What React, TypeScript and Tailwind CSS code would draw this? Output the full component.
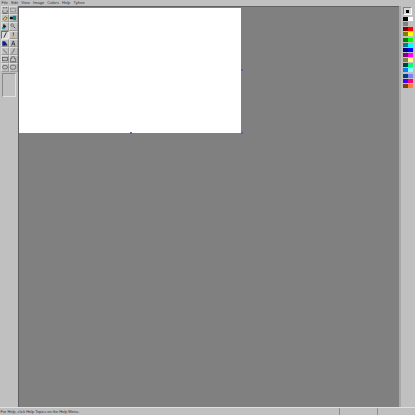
const tools: React.ReactNode[] = [
  <path d="M2 2h2M5 2h2M2 5v2M7 5v2M2 8h5" stroke="#333" strokeWidth="0.8" fill="none" />,
  <rect x="1.5" y="2.5" width="6" height="4" stroke="#555" strokeWidth="0.7" strokeDasharray="1 0.6" fill="none" />,
  <g><path d="M2 6l3-3 2 1.500-3 3z" fill="#d8d050" stroke="#222" strokeWidth="0.6" /><path d="M1 8h4" stroke="#e8e8e8" strokeWidth="0.7" /></g>,
  <g><path d="M1 3h3l1 3h-4z" fill="#111" /><path d="M4 2h4v5h-3z" fill="#108080" /></g>,
  <g><path d="M3 2l3 3-3 3-1-2z" fill="#222" /><path d="M1 6h3v2h-3z" fill="#20a0a0" /></g>,
  <g><circle cx="3.5" cy="3.5" r="1.5" fill="none" stroke="#444" strokeWidth="0.6" /><path d="M5 5l2 2" stroke="#3040c0" strokeWidth="1.1" /></g>,
  <path d="M6 1.500L3.200 7.500" stroke="#222" strokeWidth="1" />,
  <g><path d="M5 1.500v4" stroke="#806020" strokeWidth="1.2" /><path d="M4 5h2v2.500h-2z" fill="#d0b040" /></g>,
  <g><path d="M1.500 2.500h3l2 3-2 2h-3z" fill="#102090" /><path d="M5 5.500h2v2h-2z" fill="#333" /></g>,
  <path d="M3 7.500l1.500-5h.6l1.500 5M3.600 5.800h2.800" stroke="#222" strokeWidth="0.8" fill="none" />,
  <path d="M2 2.500l5 5" stroke="#333" strokeWidth="0.7" />,
  <path d="M6.500 2c-2 .5-.5 2-1.500 3s-2 .5-1.500 2.500" stroke="#333" strokeWidth="0.7" fill="none" />,
  <rect x="1.500" y="3" width="6" height="3.500" fill="#c0c0c0" stroke="#333" strokeWidth="0.6" />,
  <path d="M3 2h3v2h1.500v3.500h-6v-3.500h1.500z" fill="#c0c0c0" stroke="#333" strokeWidth="0.6" />,
  <ellipse cx="4.500" cy="4.700" rx="3" ry="2" fill="#c0c0c0" stroke="#333" strokeWidth="0.6" />,
  <rect x="1.500" y="2.500" width="6" height="4.500" rx="1.800" fill="#c0c0c0" stroke="#333" strokeWidth="0.6" />,
];

const palette = [
  ["#000000", "#ffffff"], ["#808080", "#c0c0c0"], ["#800000", "#ff0000"], ["#808000", "#ffff00"],
  ["#008000", "#00ff00"], ["#008080", "#00ffff"], ["#000080", "#0000ff"], ["#800080", "#ff00ff"],
  ["#808040", "#ffff80"], ["#004040", "#00ff80"], ["#0080ff", "#80ffff"], ["#004080", "#8080ff"],
  ["#4000ff", "#ff0080"], ["#804000", "#ff8040"],
];

const menus = ["File", "Edit", "View", "Image", "Colors", "Help", "Tyfree"];

export default function App() {
  return (
    <div className="flex h-[415px] w-[415px] flex-col overflow-hidden bg-[#c0c0c0] font-['Liberation_Sans',sans-serif] text-[#333333]">
      <div className="flex h-[6px] items-center gap-[3.2px] pl-[1.5px] text-[4px] leading-[6px]">
        {menus.map((m) => <span key={m}>{m}</span>)}
      </div>
      <div className="flex min-h-0 flex-1">
        <div className="flex w-[18px] shrink-0 flex-col items-center">
          <div className="grid w-[17px] grid-cols-2">
            {tools.map((t, i) => (
              <div key={i} className={`flex h-[8.2px] w-[8.5px] items-center justify-center border ${i === 6 ? "border-t-[#707070] border-l-[#707070] border-r-[#e8e8e8] border-b-[#e8e8e8] bg-[#dcdcdc]" : "border-t-[#dcdcdc] border-l-[#dcdcdc] border-r-[#9a9a9a] border-b-[#9a9a9a]"}`}>
                <svg viewBox="0 0 9 9" className="h-[8px] w-[8px] shrink-0">{t}</svg>
              </div>
            ))}
          </div>
          <div className="mt-[1.5px] h-[24px] w-[14px] border border-t-[#8a8a8a] border-l-[#8a8a8a] border-r-[#e0e0e0] border-b-[#e0e0e0]" />
        </div>
        <div className="relative min-w-0 flex-1 border-l border-t border-[#606060] bg-[#808080] pt-px">
          <div className="h-[124.500px] w-[222px] bg-white" />
          <i className="absolute left-[111px] top-[125px] h-[2px] w-[2px] bg-[#6060a0]" />
          <i className="absolute left-[222px] top-[62px] h-[2px] w-[2px] bg-[#6060a0]" />
          <i className="absolute left-[222px] top-[125px] h-[2px] w-[2px] bg-[#6060a0]" />
        </div>
        <div className="flex w-[16px] shrink-0 flex-col items-start border-l-2 border-[#a8a8a8] pl-[2px] pt-px">
          <div className="flex h-[8px] w-[9px] items-center justify-center border border-t-[#808080] border-l-[#808080] border-r-white border-b-white bg-[#d8d8d8]">
            <div className="h-[3px] w-[3px] bg-black" />
          </div>
          <div className="mt-[2px] grid w-[9.500px] grid-cols-2 gap-x-[0.5px] gap-y-[1.150px]">
            {palette.flat().map((c, i) => (
              <div key={i} className="h-[4px]" style={{ backgroundColor: c }} />
            ))}
          </div>
        </div>
      </div>
      <div className="flex h-[8px] border-t border-[#e0e0e0] text-[3.9px] leading-[7px]">
        <div className="flex-1 pl-[0.5px]">For Help, click Help Topics on the Help Menu.</div>
        <div className="w-[38px] border-l border-[#909090]" />
        <div className="w-[38px] border-l border-[#909090]" />
      </div>
    </div>
  );
}
